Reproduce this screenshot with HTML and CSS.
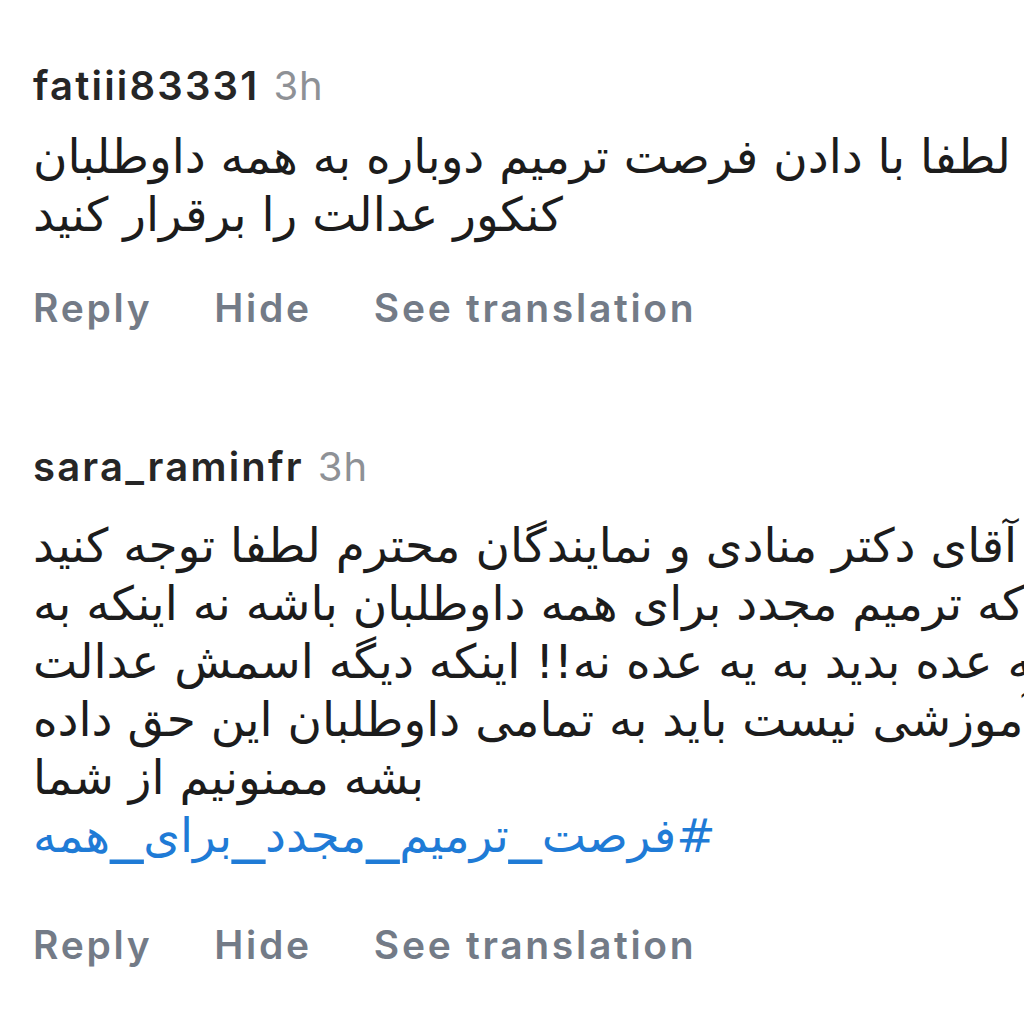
FILE: index.html
```html
<!DOCTYPE html>
<html lang="en">
<head>
<meta charset="utf-8">
<title>Comments</title>
<link rel="stylesheet" href="styles.css">
</head>
<body>
<main class="comments">
  <article class="comment">
    <header class="meta"><span class="user">fatiii83331</span><span class="time">3h</span></header>
    <div class="body body-first" lang="fa">
      <p class="line">لطفا با دادن فرصت ترمیم دوباره به همه داوطلبان</p>
      <p class="line">کنکور عدالت را برقرار کنید</p>
    </div>
    <nav class="actions actions-first"><span>Reply</span><span>Hide</span><span>See translation</span></nav>
  </article>
  <article class="comment comment-second">
    <header class="meta"><span class="user">sara_raminfr</span><span class="time">3h</span></header>
    <div class="body body-second" lang="fa">
      <p class="line">آقای دکتر منادی و نمایندگان محترم لطفا توجه کنید</p>
      <p class="line">که ترمیم مجدد برای همه داوطلبان باشه نه اینکه به</p>
      <p class="line">یه عده بدید به یه عده نه!! اینکه دیگه اسمش عدالت</p>
      <p class="line">آموزشی نیست باید به تمامی داوطلبان این حق داده</p>
      <p class="line">بشه ممنونیم از شما</p>
      <p class="line tag">#فرصت<span class="us">_</span>ترمیم<span class="us">_</span>مجدد<span class="us">_</span>برای<span class="us">_</span>همه</p>
    </div>
    <nav class="actions actions-second"><span>Reply</span><span>Hide</span><span>See translation</span></nav>
  </article>
</main>
</body>
</html>
```
FILE: styles.css
```css
html, body {
  margin: 0;
  padding: 0;
  background: #ffffff;
  overflow: hidden;
  width: 1024px;
  height: 1024px;
}
.comments {
  padding: 60px 0 0 33px;
  display: flex;
  flex-direction: column;
}
.comment-second {
  margin-top: 109px;
}
.meta {
  display: flex;
  align-items: baseline;
  gap: 14px;
  font-family: "Inter", "Liberation Sans", sans-serif;
  font-size: 40px;
  line-height: 52px;
  height: 52px;
}
.user {
  font-weight: 600;
  color: #262626;
  letter-spacing: 2.2px;
}
.time {
  font-weight: 400;
  color: #8e9196;
  letter-spacing: 1px;
}
.body-first {
  margin-top: 16px;
}
.body-second {
  margin-top: 24px;
}
.line {
  margin: 0;
  display: block;
  width: max-content;
  white-space: nowrap;
  direction: rtl;
  unicode-bidi: isolate;
  font-family: "DejaVu Sans", sans-serif;
  font-size: 47px;
  line-height: 58px;
  color: #1c1c1c;
}
.tag {
  color: #1f7bd6;
}
.us {
  font-size: 66px;
  line-height: 0;
  vertical-align: 4px;
}
.actions {
  display: flex;
  gap: 62px;
  font-family: "Inter", "Liberation Sans", sans-serif;
  font-size: 39px;
  line-height: 48px;
  font-weight: 600;
  color: #737b87;
  letter-spacing: 2.7px;
}
.actions-first {
  margin-top: 40px;
}
.actions-second {
  margin-top: 56px;
}
```
